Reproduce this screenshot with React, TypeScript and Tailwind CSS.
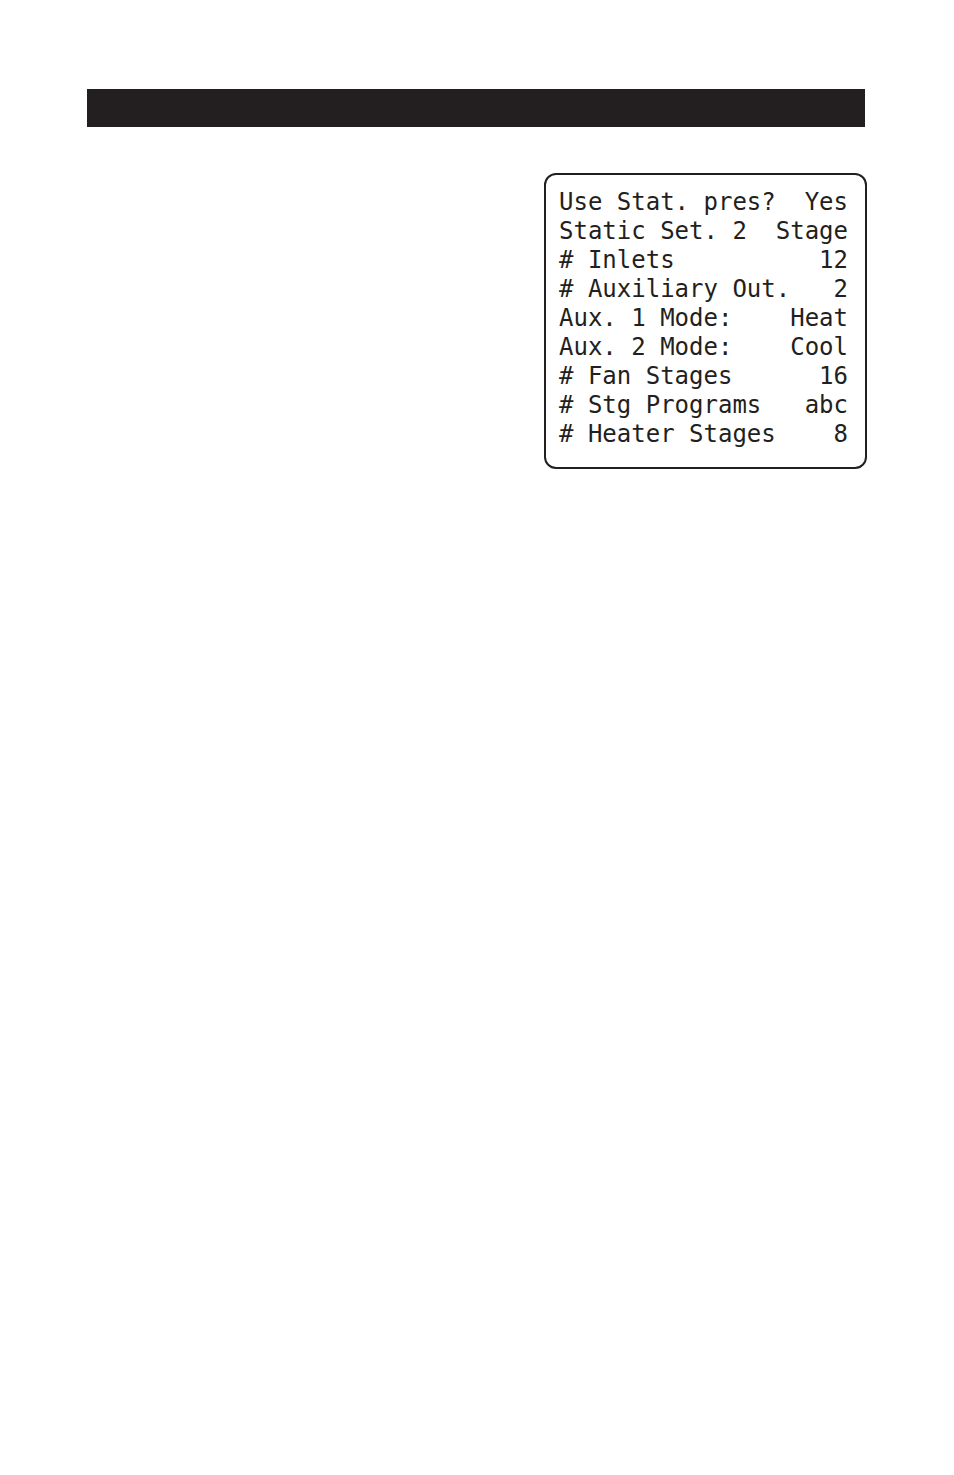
import React from 'react';

const settings = [
  { label: 'Use Stat. pres?', value: 'Yes' },
  { label: 'Static Set. 2', value: 'Stage' },
  { label: '# Inlets', value: '12' },
  { label: '# Auxiliary Out.', value: '2' },
  { label: 'Aux. 1 Mode:', value: 'Heat' },
  { label: 'Aux. 2 Mode:', value: 'Cool' },
  { label: '# Fan Stages', value: '16' },
  { label: '# Stg Programs', value: 'abc' },
  { label: '# Heater Stages', value: '8' },
];

export default function App() {
  return (
    <main className="min-h-screen bg-white pt-[89px] pr-[87px] pb-12 pl-[87px] text-[#231f20]">
      <div className="mr-[2px] h-[38px] bg-[#231f20]" />
      <section className="mt-[46px] ml-auto w-fit rounded-xl border-2 border-[#231f20] pt-[13px] pr-[17px] pb-[18px] pl-[13px]">
        {/* the display is 20 characters wide */}
        <dl className="w-[20ch] font-['DejaVu_Sans_Mono',monospace] text-[24px] leading-[29px]">
          {settings.map((row) => (
            <div key={row.label} className="flex justify-between whitespace-nowrap">
              <dt>{row.label}</dt>
              <dd>{row.value}</dd>
            </div>
          ))}
        </dl>
      </section>
    </main>
  );
}
